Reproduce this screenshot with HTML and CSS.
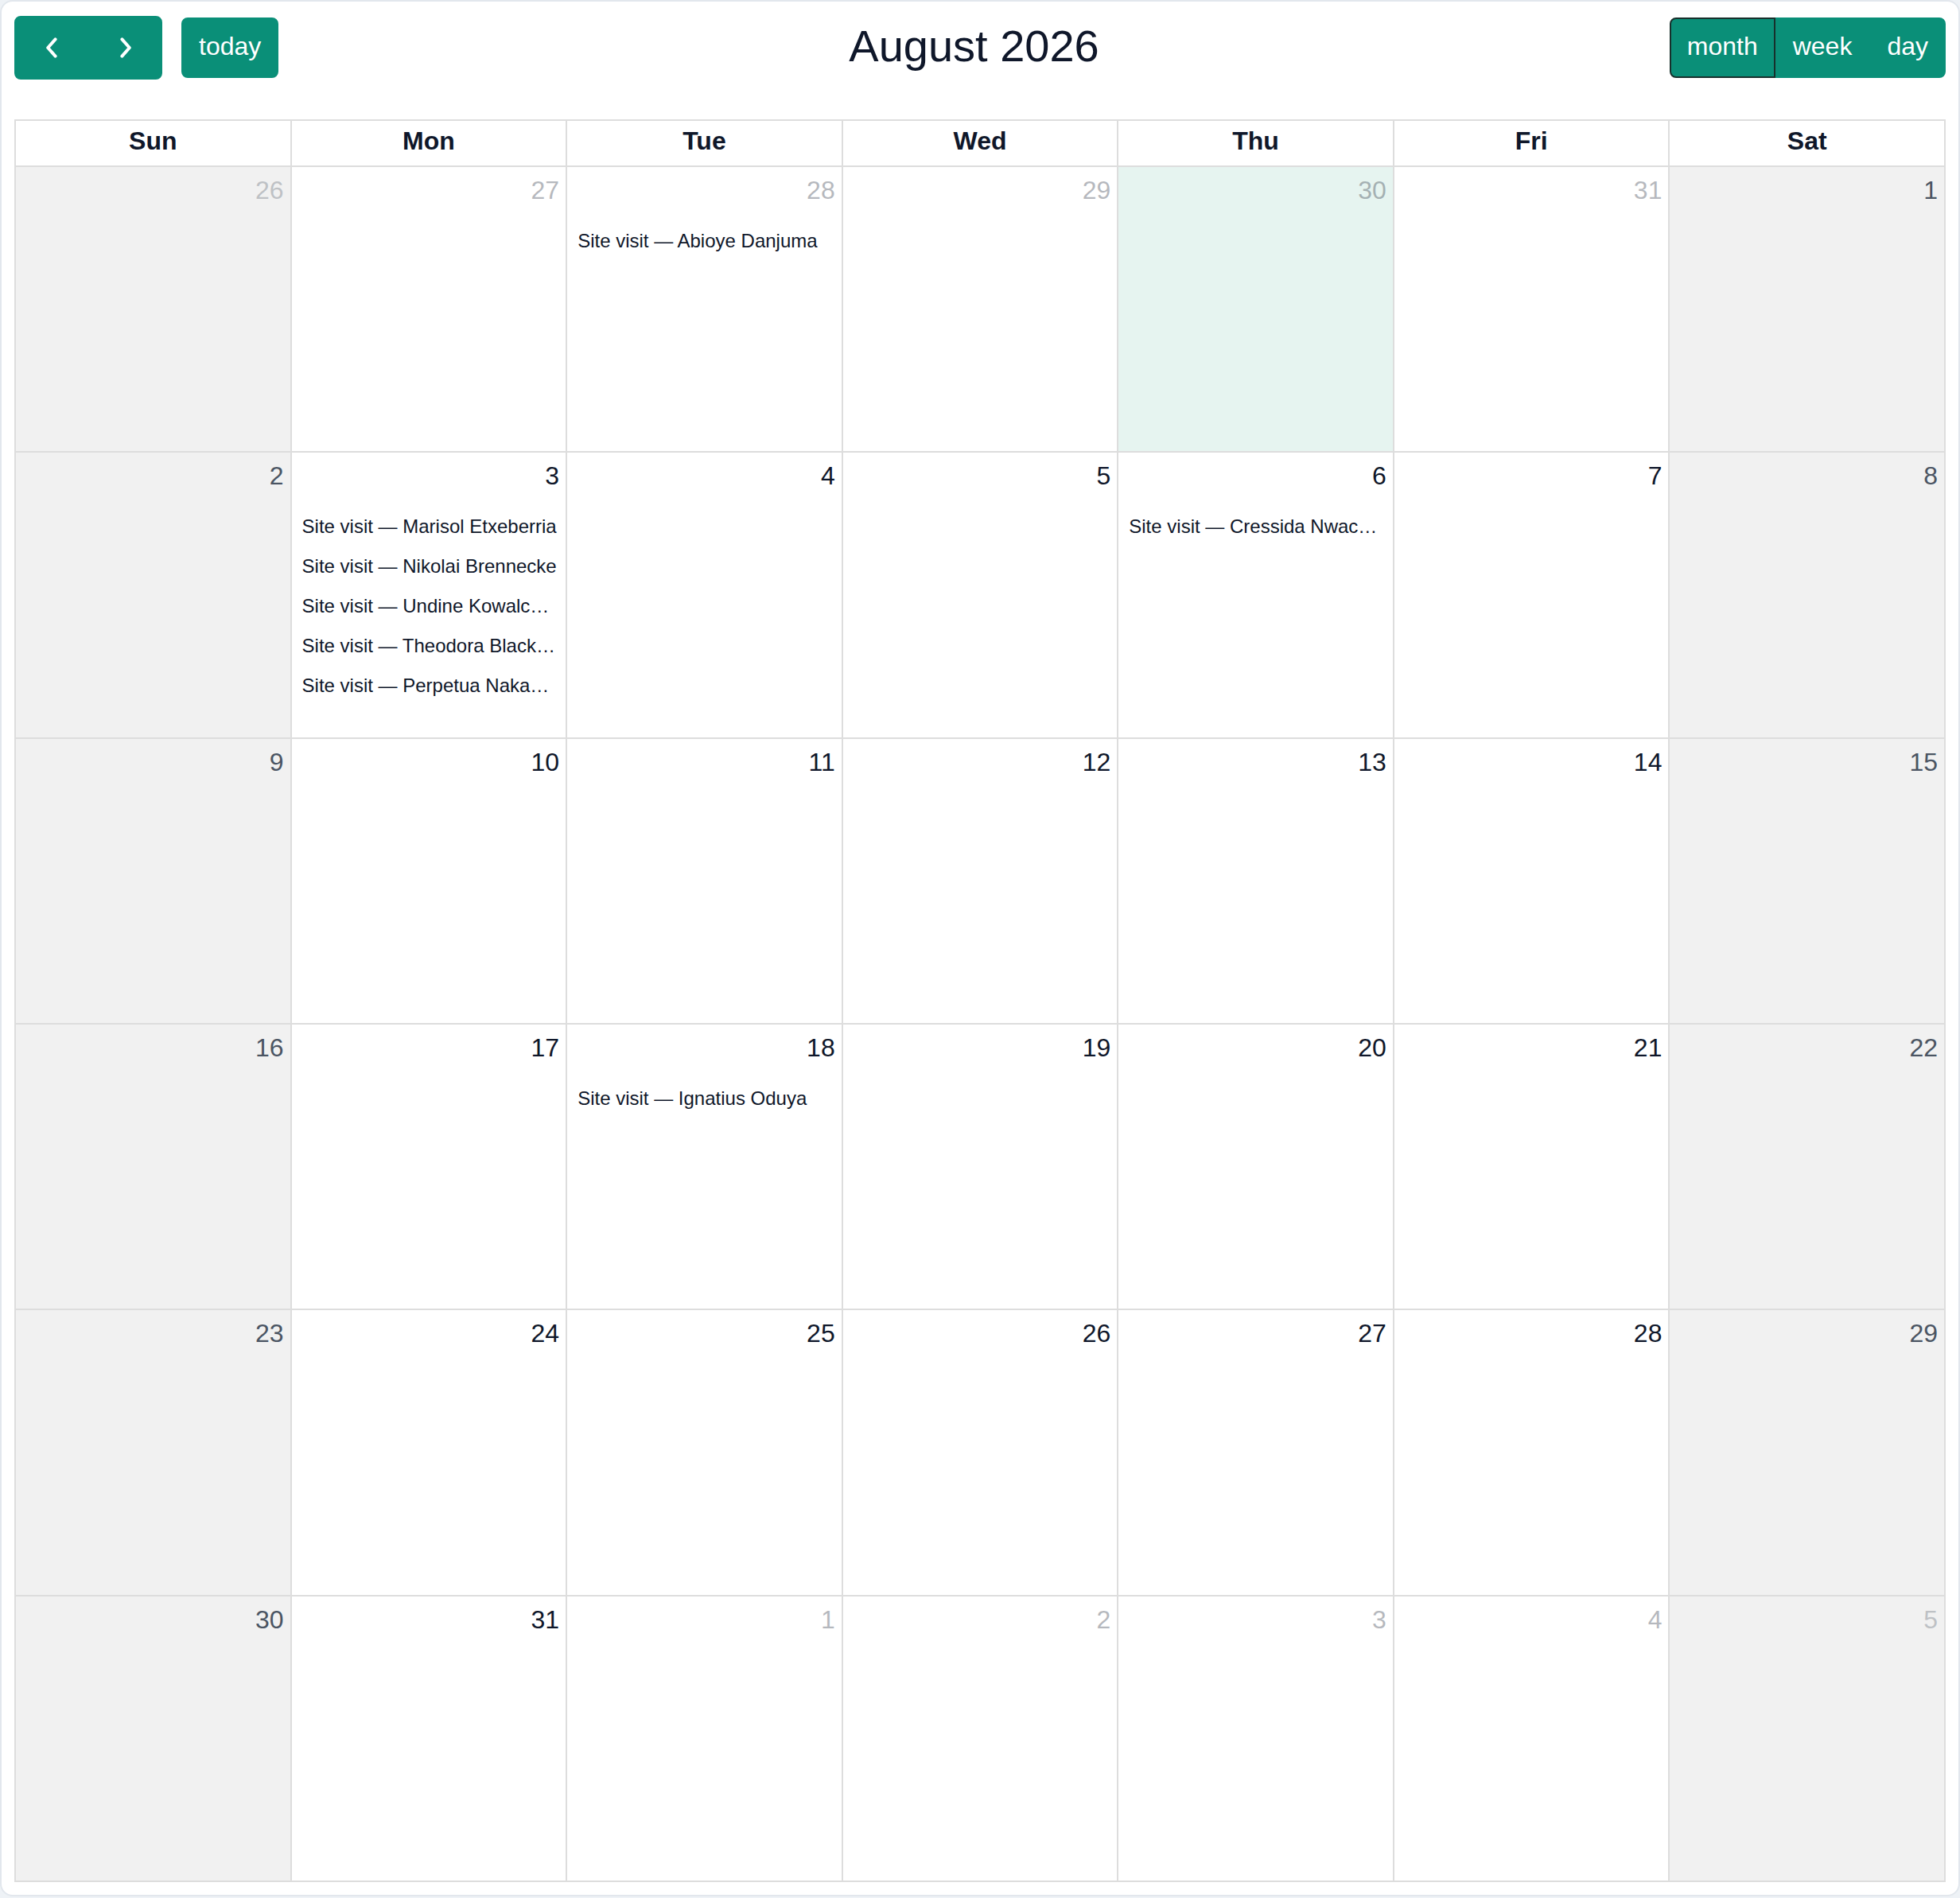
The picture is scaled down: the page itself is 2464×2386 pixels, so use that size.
FILE: index.html
```html
<!DOCTYPE html>
<html lang="en">
<head>
<meta charset="utf-8">
<title>August 2026</title>
<link rel="stylesheet" href="styles.css">
</head>
<body>
<div class="card">
  <div class="toolbar">
    <div class="chunk">
      <div class="btn-group">
        <button class="btn btn-icon" aria-label="prev">
          <svg width="16" height="26" viewBox="0 0 8 13"><path d="M6.3 1.2 L1.6 6.5 L6.3 11.8" fill="none" stroke="#fff" stroke-width="2" stroke-linecap="round" stroke-linejoin="round"/></svg>
        </button>
        <button class="btn btn-icon" aria-label="next">
          <svg width="16" height="26" viewBox="0 0 8 13"><path d="M1.7 1.2 L6.4 6.5 L1.7 11.8" fill="none" stroke="#fff" stroke-width="2" stroke-linecap="round" stroke-linejoin="round"/></svg>
        </button>
      </div>
      <button class="btn btn-text">today</button>
    </div>
    <h2 class="title">August 2026</h2>
    <div class="chunk">
      <div class="btn-group views">
        <button class="btn btn-text active">month</button>
        <button class="btn btn-text">week</button>
        <button class="btn btn-text">day</button>
      </div>
    </div>
  </div>

  <div class="cal">
    <div class="head">
      <div class="hcell">Sun</div>
      <div class="hcell">Mon</div>
      <div class="hcell">Tue</div>
      <div class="hcell">Wed</div>
      <div class="hcell">Thu</div>
      <div class="hcell">Fri</div>
      <div class="hcell">Sat</div>
    </div>
    <div class="body">
      <div class="day weekend other"><div class="num">26</div></div>
      <div class="day other"><div class="num">27</div></div>
      <div class="day other"><div class="num">28</div><div class="events"><div class="ev">Site visit — Abioye Danjuma</div></div></div>
      <div class="day other"><div class="num">29</div></div>
      <div class="day other today"><div class="num">30</div></div>
      <div class="day other"><div class="num">31</div></div>
      <div class="day weekend"><div class="num">1</div></div>

      <div class="day weekend"><div class="num">2</div></div>
      <div class="day"><div class="num">3</div><div class="events">
        <div class="ev">Site visit — Marisol Etxeberria</div>
        <div class="ev">Site visit — Nikolai Brennecke</div>
        <div class="ev">Site visit — Undine Kowalczyk</div>
        <div class="ev">Site visit — Theodora Blackwood</div>
        <div class="ev">Site visit — Perpetua Nakamura</div>
      </div></div>
      <div class="day"><div class="num">4</div></div>
      <div class="day"><div class="num">5</div></div>
      <div class="day"><div class="num">6</div><div class="events"><div class="ev">Site visit — Cressida Nwachukwu</div></div></div>
      <div class="day"><div class="num">7</div></div>
      <div class="day weekend"><div class="num">8</div></div>

      <div class="day weekend"><div class="num">9</div></div>
      <div class="day"><div class="num">10</div></div>
      <div class="day"><div class="num">11</div></div>
      <div class="day"><div class="num">12</div></div>
      <div class="day"><div class="num">13</div></div>
      <div class="day"><div class="num">14</div></div>
      <div class="day weekend"><div class="num">15</div></div>

      <div class="day weekend"><div class="num">16</div></div>
      <div class="day"><div class="num">17</div></div>
      <div class="day"><div class="num">18</div><div class="events"><div class="ev">Site visit — Ignatius Oduya</div></div></div>
      <div class="day"><div class="num">19</div></div>
      <div class="day"><div class="num">20</div></div>
      <div class="day"><div class="num">21</div></div>
      <div class="day weekend"><div class="num">22</div></div>

      <div class="day weekend"><div class="num">23</div></div>
      <div class="day"><div class="num">24</div></div>
      <div class="day"><div class="num">25</div></div>
      <div class="day"><div class="num">26</div></div>
      <div class="day"><div class="num">27</div></div>
      <div class="day"><div class="num">28</div></div>
      <div class="day weekend"><div class="num">29</div></div>

      <div class="day weekend"><div class="num">30</div></div>
      <div class="day"><div class="num">31</div></div>
      <div class="day other"><div class="num">1</div></div>
      <div class="day other"><div class="num">2</div></div>
      <div class="day other"><div class="num">3</div></div>
      <div class="day other"><div class="num">4</div></div>
      <div class="day weekend other"><div class="num">5</div></div>
    </div>
  </div>
</div>
</body>
</html>
```

FILE: styles.css
```css
* { box-sizing: border-box; }

html, body {
  margin: 0;
  padding: 0;
  background: #eef2f6;
  font-family: "Liberation Sans", Arial, sans-serif;
  color: #0f172a;
}

.card {
  width: 2464px;
  height: 2384px;
  background: #ffffff;
  border: 2px solid #e2e7ed;
  border-radius: 16px;
  padding: 18px 16px 16px 16px;
  display: flex;
  flex-direction: column;
}

.toolbar {
  display: flex;
  justify-content: space-between;
  align-items: center;
  height: 80px;
  margin-bottom: 50px;
}

.chunk {
  display: flex;
  align-items: center;
  gap: 24px;
}

.title {
  margin: 0;
  font-size: 56px;
  font-weight: 400;
  line-height: 64px;
  color: #0f172a;
  position: relative;
  top: -2px;
}

.btn {
  font-family: "Liberation Sans", Arial, sans-serif;
  background: #0a8f78;
  border: 2px solid #0a8f78;
  color: #ffffff;
  border-radius: 8px;
  margin: 0;
  cursor: pointer;
}

.btn-text {
  font-size: 32px;
  line-height: 48px;
  padding: 10px 20px 14px 20px;
  height: 76px;
}

.btn-icon {
  width: 93px;
  height: 80px;
  padding: 0;
  display: flex;
  align-items: center;
  justify-content: center;
}

.btn-icon svg { display: block; }

.btn-group {
  display: flex;
  align-items: center;
}

.btn-group .btn { border-radius: 0; }
.btn-group .btn:first-child { border-radius: 8px 0 0 8px; }
.btn-group .btn:last-child { border-radius: 0 8px 8px 0; }

.btn.active {
  border-color: #17302c;
}

.cal {
  flex: 1;
  display: flex;
  flex-direction: column;
  border-top: 2px solid #dddddd;
  border-left: 2px solid #dddddd;
  min-height: 0;
}

.head {
  display: grid;
  grid-template-columns: repeat(7, 1fr);
}

.hcell {
  text-align: center;
  font-weight: 700;
  font-size: 32px;
  line-height: 48px;
  padding: 1px 8px 7px 8px;
  border-right: 2px solid #dddddd;
  border-bottom: 2px solid #dddddd;
  color: #0f172a;
}

.body {
  flex: 1;
  display: grid;
  grid-template-columns: repeat(7, 1fr);
  grid-template-rows: repeat(6, 1fr);
  min-height: 0;
}

.day {
  border-right: 2px solid #dddddd;
  border-bottom: 2px solid #dddddd;
  min-width: 0;
  min-height: 0;
  overflow: hidden;
  background: #ffffff;
}

.day.weekend { background: #f1f1f1; }
.day.today { background: #e6f4f0; }

.num {
  text-align: right;
  font-size: 32px;
  line-height: 48px;
  padding: 5px 8px 11px 8px;
  color: #0f172a;
}

.day.weekend .num { color: #4b5563; }
.day.other .num { opacity: 0.3; }

.events {
  padding-top: 4px;
}

.ev {
  margin: 0 4px;
  padding: 8px 6px 8px 9px;
  font-size: 24px;
  line-height: 34px;
  white-space: nowrap;
  overflow: hidden;
  text-overflow: ellipsis;
  color: #0f172a;
}
```
